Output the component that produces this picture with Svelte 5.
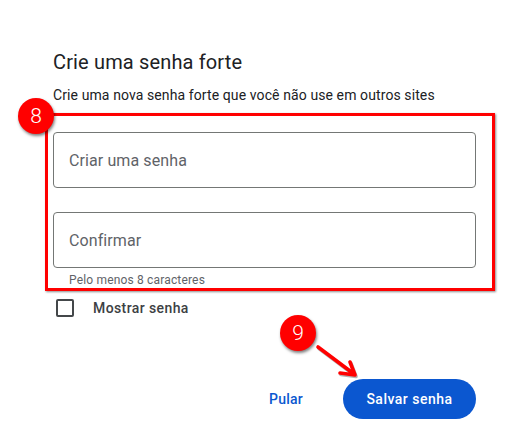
<script>
  const fields = ['Criar uma senha', 'Confirmar'];
</script>

<main class="page">
  <h1>Crie uma senha forte</h1>
  <p class="sub">Crie uma nova senha forte que você não use em outros sites</p>
  <div class="fields">
    {#each fields as f}
      <div class="field">{f}</div>
    {/each}
  </div>
  <p class="hint">Pelo menos 8 caracteres</p>
  <div class="check">
    <span class="box"></span>
    <span class="label">Mostrar senha</span>
  </div>
  <div class="actions">
    <button class="skip">Pular</button>
    <button class="save">Salvar senha</button>
  </div>
  <div class="rect"></div>
  <div class="badge b8">8</div>
  <div class="badge b9">9</div>
  <svg class="arrow" width="60" height="50" viewBox="0 0 60 50">
    <g fill="none" stroke-linecap="round" stroke-linejoin="round">
      <path d="M7 6 L 43 33 M 29 32 L 44 34 L 39 21" stroke="#000" stroke-opacity=".3" stroke-width="3.6" transform="translate(1 1.5)"/>
      <path d="M7 6 L 43 33 M 29 32 L 44 34 L 39 21" stroke="#f00" stroke-width="3.6"/>
    </g>
  </svg>
</main>

<style>
  :global(body) { margin: 0; background: #fff; }
  .page {
    position: relative;
    width: 505px;
    height: 445px;
    box-sizing: border-box;
    padding: 49px 29px 0 53px;
    font-family: Roboto, "Liberation Sans", sans-serif;
    overflow: hidden;
  }
  h1 {
    margin: 0;
    font-size: 20px;
    font-weight: 400;
    line-height: 26px;
    letter-spacing: .15px;
    color: #202124;
  }
  .sub {
    margin: 10px 0 0;
    font-size: 14px;
    line-height: 20px;
    letter-spacing: .1px;
    color: #202124;
  }
  .fields {
    display: flex;
    flex-direction: column;
    gap: 24px;
    margin-top: 27px;
  }
  .field {
    box-sizing: border-box;
    height: 56px;
    border: 1px solid #747775;
    border-radius: 4px;
    padding: 0 15px;
    display: flex;
    align-items: center;
    font-size: 16px;
    letter-spacing: .1px;
    color: #5f6368;
  }
  .hint {
    margin: 5px 0 0 16px;
    font-size: 12px;
    line-height: 14px;
    letter-spacing: .17px;
    color: #5f6368;
  }
  .check {
    display: flex;
    align-items: center;
    gap: 19px;
    margin: 11px 0 0 3px;
  }
  .box {
    box-sizing: border-box;
    width: 18px;
    height: 18px;
    border: 2px solid #44474a;
    border-radius: 2px;
  }
  .label {
    font-size: 14px;
    font-weight: 500;
    line-height: 20px;
    letter-spacing: .4px;
    color: #3c4043;
  }
  .actions {
    display: flex;
    justify-content: flex-end;
    align-items: center;
    gap: 31px;
    margin-top: 61px;
  }
  button {
    font: 500 14px/20px Roboto, "Liberation Sans", sans-serif;
    letter-spacing: .5px;
    border: 0;
    background: none;
    padding: 0;
  }
  .skip { color: #0b57d0; width: 52px; text-align: center; letter-spacing: .2px; }
  .save {
    width: 133px;
    height: 40px;
    border-radius: 20px;
    background: #0b57d0;
    color: #fff;
  }
  .rect {
    position: absolute;
    left: 45px;
    top: 113px;
    width: 450px;
    height: 178px;
    box-sizing: border-box;
    border: 3px solid #f00;
    box-shadow: 1px 1px 2px rgba(0, 0, 0, .45);
  }
  .badge {
    position: absolute;
    width: 36px;
    height: 36px;
    border-radius: 50%;
    background: #f00;
    color: #fff;
    display: flex;
    align-items: center;
    justify-content: center;
    font: 300 21px Roboto, sans-serif;
    box-shadow: 1px 2px 3px rgba(0, 0, 0, .5);
  }
  .b8 { left: 18px; top: 98px; }
  .b9 { left: 280px; top: 315px; }
  .arrow { position: absolute; left: 311px; top: 341px; }
</style>
